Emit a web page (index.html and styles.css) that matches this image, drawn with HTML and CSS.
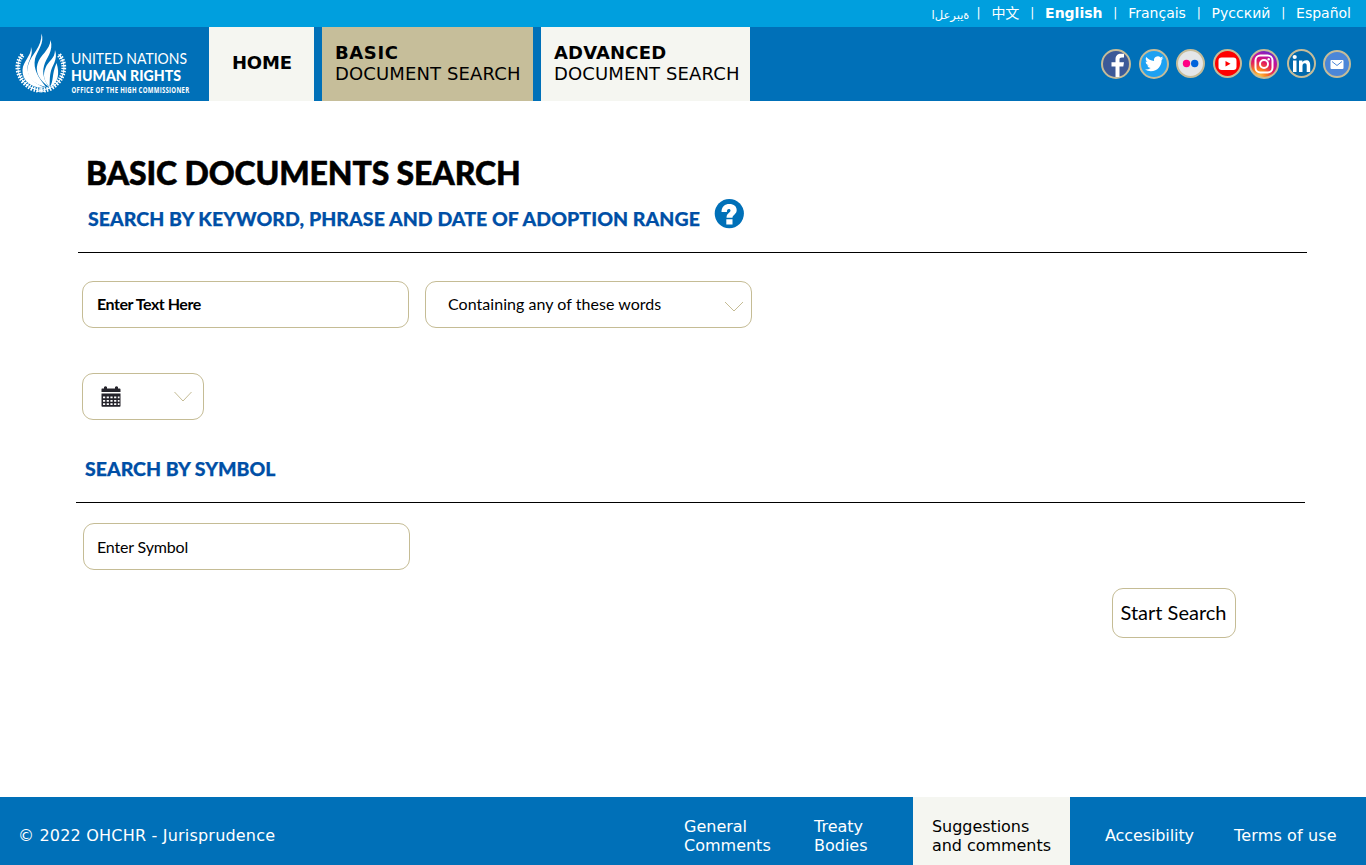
FILE: index.html
```html
<!DOCTYPE html>
<html lang="en">
<head>
<meta charset="utf-8">
<title>OHCHR - Jurisprudence</title>
<link rel="stylesheet" href="styles.css">
</head>
<body>
<div class="page">
  <div class="languages">
    <span class="lang lang-ar">ةيبرعل&zwnj;ا</span><span class="bar bar-first">|</span>
    <span class="lang lang-zh">中文</span><span class="bar">|</span>
    <span class="lang lang-en">English</span><span class="bar">|</span>
    <span class="lang lang-fr">Français</span><span class="bar">|</span>
    <span class="lang lang-ru">Русский</span><span class="bar">|</span>
    <span class="lang lang-es">Español</span>
  </div>
  <header class="header">
    <svg class="logo" viewBox="0 0 209 74" width="209" height="74">
      <g fill="#fff">
        <path d="M41.500 6.500C45 16 37 24 35 32C33 42 38 50 46 60C32 57 25 48 28.500 37C31 28 42 20 41.500 6.500Z"/>
        <path d="M50.500 13C54 24 46 31 44 39C42 46 44 53 49 60C39 53 35 45 37.500 37C40 28 50 23 50.500 13Z"/>
        <path d="M55 23C58.500 33 51.500 39 50.500 46C49.500 51 50 54 49.500 60C44 54 42.500 48 45.500 41C48 34 55 32 55 23Z"/>
        <path d="M56.500 36C60 47 58 56 50 60C54 53 51.500 48 56.500 36Z"/>
        <path d="M31 20C34 28 27.500 34 27.500 41C27.500 49 34 57 45 60.500C31 62 22 53 22.500 43C23 34 31.500 29 31 20Z"/>
      </g>
      <g fill="none" stroke="#fff">
        <path d="M23 27C14 37 17 54 32 61Q38 63 46 65M58.500 27C68 37 65 54 50 61Q43 63 36 65" stroke-width="1"/>
        <path d="M22.500 28C14 37 17 54 33 62Q37 63 41 63" stroke-width="4.800" stroke-dasharray="1.500 1.300"/>
        <path d="M59 28C67.500 37 65 54 49 62Q45 63 41 63" stroke-width="4.800" stroke-dasharray="1.500 1.300"/>
      </g>
      <text class="logo-light" x="71" y="37.300" textLength="116" lengthAdjust="spacingAndGlyphs">UNITED NATIONS</text>
      <text class="logo-bold" x="71" y="53.800" textLength="110" lengthAdjust="spacingAndGlyphs">HUMAN RIGHTS</text>
      <text class="logo-small" transform="translate(71.500 66.200) scale(.75 1)">OFFICE OF THE HIGH COMMISSIONER</text>
    </svg>
    <nav class="tabs">
      <a class="tab tab-home"><b>HOME</b></a>
      <a class="tab tab-basic"><b>BASIC</b><span>DOCUMENT SEARCH</span></a>
      <a class="tab tab-advanced"><b>ADVANCED</b><span>DOCUMENT SEARCH</span></a>
    </nav>
    <div class="social">
      <svg width="266" height="32" viewBox="1100 48 266 32">
        <defs>
          <radialGradient id="insta" cx=".28" cy="1" r="1.05">
            <stop offset="0" stop-color="#ffdc5a"/><stop offset=".3" stop-color="#fa7e1e"/>
            <stop offset=".58" stop-color="#e01563"/><stop offset=".8" stop-color="#b515a8"/><stop offset="1" stop-color="#5b30d0"/>
          </radialGradient>
        </defs>
        <g stroke="#c5bc99" stroke-width="2">
          <circle cx="1116" cy="64" r="14" fill="#3b5998"/>
          <circle cx="1154" cy="64" r="14" fill="#1da1f2"/>
          <circle cx="1190.500" cy="63.500" r="13.500" fill="#e4e6e8"/>
          <circle cx="1227.500" cy="63.500" r="13.500" fill="#f00"/>
          <circle cx="1264" cy="64" r="14" fill="url(#insta)"/>
          <circle cx="1301.500" cy="63.500" r="13.500" fill="#0069ac"/>
          <circle cx="1337" cy="64" r="13" fill="#4b86d8"/>
        </g>
        <path fill="#fff" d="M1115.500 77V66.500h-4v-4.300h4v-2.700c0-4 2.300-5.700 5.500-5.700h3v3.600h-2c-2 0-2.500.9-2.500 2.300v2.500h4.500l-.7 4.300h-3.800V77z"/>
        <path fill="#fff" transform="translate(1145 54.500) scale(.77)" d="M23.950 4.570a10 10 0 01-2.820.77 4.960 4.960 0 002.160-2.720c-.95.550-2 .950-3.120 1.180a4.920 4.920 0 00-8.380 4.480C7.690 8.090 4.070 6.130 1.640 3.160a4.820 4.820 0 00-.67 2.470c0 1.710.87 3.210 2.190 4.100a4.900 4.900 0 01-2.230-.61v.06a4.920 4.920 0 003.950 4.820 5 5 0 01-2.210.09 4.940 4.940 0 004.600 3.420A9.870 9.870 0 010 19.540a14 14 0 007.550 2.210c9.050 0 14-7.500 14-13.980 0-.21 0-.42-.02-.63a9.940 9.940 0 002.460-2.550z"/>
        <circle cx="1186.500" cy="63.500" r="3.700" fill="#ff0084"/><circle cx="1194.700" cy="63.500" r="3.700" fill="#0063dc"/>
        <rect x="1218.500" y="57.500" width="18" height="12.500" rx="3.200" fill="#fff"/><path d="M1225.500 61v5.600l5-2.800z" fill="#f00"/>
        <g fill="none" stroke="#fff" stroke-width="2"><rect x="1255.500" y="55.500" width="17" height="17" rx="4.800"/><circle cx="1264" cy="64" r="4"/></g><circle cx="1268.700" cy="59.300" r="1.200" fill="#fff"/>
        <path fill="#fff" d="M1293 60.500h3.500V72H1293zM1299 60.500h3.400v1.700c.7-1.200 2-2 3.700-2 3.200 0 4.100 2 4.100 5.200V72h-3.500v-5.900c0-1.700-.3-2.900-1.900-2.900s-2.300 1.100-2.300 2.900V72h-3.500z"/><circle cx="1294.700" cy="57" r="2.100" fill="#fff"/>
        <rect x="1330.500" y="60" width="13" height="9" rx="1" fill="#fff"/><path d="M1332 61.500l5 4 5-4" fill="none" stroke="#4b86d8"/>
      </svg>
    </div>
  </header>
  <main class="main">
    <h1 class="title">BASIC DOCUMENTS SEARCH</h1>
    <div class="section-head">
      <h2 class="subtitle subtitle-keyword">SEARCH BY KEYWORD, PHRASE AND DATE OF ADOPTION RANGE</h2>
      <svg class="help" width="30" height="30" viewBox="0 0 30 30"><circle cx="15.300" cy="14.600" r="14.600" fill="#0070b8"/><path fill="#fff" d="M7.500 13C7.500 7.500 11 5 15.300 5c4.700 0 7.400 2.400 7.400 6.200 0 4-4.200 4.600-4.200 7.500h-6c0-4.700 4-4.700 4-7.100 0-1.100-.6-1.700-1.600-1.700-1.400 0-2 1-2 3.100zM12.300 20.200h6.200v5.200h-6.200z"/></svg>
    </div>
    <hr class="rule">
    <div class="row">
      <div class="field field-text"><span class="enter-text">Enter Text Here</span></div>
      <div class="field field-select"><span class="containing">Containing any of these words</span><svg class="chevron" width="20" height="12" viewBox="0 0 20 12"><path d="M1 1l9 9 9-9"/></svg></div>
    </div>
    <div class="field field-date">
      <svg width="20" height="21" viewBox="0 0 20 21"><path fill="#24232b" d="M1 2.500h2V1q1.500-1.500 3 0v1.500h8V1q1.500-1.500 3 0v1.500h1.500q1 0 1 1V6H.5V3.500q0-1 .5-1zM.5 7.500h19V20q0 .7-.7.700H1.200q-.7 0-.7-.7z"/><path stroke="#fff" stroke-width="1.800" stroke-dasharray="2.200 1.500" d="M2 11.300h16.500M2 14.800h16.500M2 18.200h16.500"/></svg>
      <svg class="chevron" width="20" height="12" viewBox="0 0 20 12"><path d="M1.500 1l8.500 9 8.500-9"/></svg>
    </div>
    <h2 class="subtitle subtitle-symbol">SEARCH BY SYMBOL</h2>
    <hr class="rule rule-symbol">
    <div class="field field-symbol"><span class="enter-symbol">Enter Symbol</span></div>
    <button class="start"><span>Start Search</span></button>
  </main>
  <footer class="footer">
    <span class="copyright">© 2022 OHCHR - Jurisprudence</span>
    <nav class="links">
      <a class="link link-general">General<br>Comments</a>
      <a class="link link-treaty">Treaty<br>Bodies</a>
      <a class="link link-suggest">Suggestions<br>and comments</a>
      <a class="link link-access">Accesibility</a>
      <a class="link link-terms">Terms of use</a>
    </nav>
  </footer>
</div>
</body>
</html>
```
FILE: styles.css
```css
* { box-sizing: border-box; }
body { margin: 0; background: #fff; color: #000; font-family: "DejaVu Sans", sans-serif; }
.page { height: 865px; display: flex; flex-direction: column; }

.languages { height: 27px; background: #009fde; color: #fff; display: flex; align-items: center; justify-content: flex-end; padding: 0 15px 2px 0; font-size: 14px; line-height: 24px; }
.lang { white-space: nowrap; }
.lang-ar { font-size: 11.500px; padding-top: 5px; }
.lang-zh { font-family: "Noto Sans CJK SC", sans-serif; font-size: 14px; padding-bottom: 2px; }
.lang-en { font-weight: bold; }
.bar { width: 25.700px; font-size: 12px; text-align: center; }
.bar-first { width: 22px; text-align: left; padding-left: 7px; }

.header { height: 74px; background: #0070b8; display: flex; }
.logo { flex: none; fill: #fff; }
.logo-light { font: 400 15.500px Lato, sans-serif; }
.logo-bold { font: 900 15px Lato, sans-serif; }
.logo-small { font: 700 8px "Open Sans", sans-serif; letter-spacing: .38px; }
.tabs { display: flex; gap: 8px; }
.tab { background: #f5f6f1; display: flex; flex-direction: column; justify-content: center; font-size: 18px; line-height: 21px; white-space: nowrap; padding: 0 0 3px; }
.tab span { letter-spacing: .13px; }
.tab-home { width: 105px; padding-left: 23px; letter-spacing: -.2px; }
.tab-basic { width: 211px; padding-left: 13px; background: #c6be9a; }
.tab-basic b { letter-spacing: .6px; }
.tab-advanced { width: 209px; padding-left: 13px; }
.tab-advanced b { letter-spacing: .15px; }
.social { margin-left: auto; padding-top: 21px; }

.main { flex: 1; padding: 53px 59px 0 78px; font-family: Lato, sans-serif; }
.title { margin: 0; padding-left: 8px; font-size: 32px; line-height: 38px; font-weight: 900; letter-spacing: -.13px; -webkit-text-stroke: .5px #000; white-space: nowrap; }
.section-head { display: flex; align-items: flex-start; gap: 14px; padding: 6px 0 0 10px; }
.subtitle { margin: 0; color: #004fa6; font-size: 19.500px; line-height: 24px; font-weight: 900; -webkit-text-stroke: .25px #004fa6; white-space: nowrap; }
.subtitle-keyword { margin-top: 9px; width: 612px; letter-spacing: .06px; }
.help { margin-top: 1px; }
.rule { margin: 21px 0 0; border: 0; height: 1px; background: #000; }
.row { display: flex; gap: 16px; padding: 28px 0 0 4px; }
.field { height: 47px; border: 1px solid #c5bc95; border-radius: 11px; display: flex; align-items: center; font-size: 16px; white-space: nowrap; }
.field-text { width: 327px; padding: 0 0 2px 14px; font-weight: 700; letter-spacing: -.45px; }
.field-select { width: 327px; padding: 0 7px 2px 22px; justify-content: space-between; letter-spacing: .04px; }
.chevron { flex: none; fill: none; stroke: #c5bc95; stroke-width: 1; }
.field-select .chevron { margin-top: 6px; }
.field-date { width: 122px; margin: 45px 0 0 4px; padding: 0 10px 0 18px; justify-content: space-between; }
.field-date .chevron { margin-top: 1px; }
.subtitle-symbol { margin: 37px 0 0 7px; }
.rule-symbol { margin: 21px 2px 0 -2px; }
.field-symbol { width: 327px; margin: 20px 0 0 5px; padding-left: 13px; letter-spacing: -.17px; }
.start { display: flex; align-items: center; justify-content: center; width: 124px; height: 50px; margin: 18px 0 0 1034px; padding: 0 1px 2px 0; border: 1px solid #c5bc95; border-radius: 11px; background: #fff; color: #000; font: 20px Lato, sans-serif; white-space: nowrap; }

.footer { height: 68px; background: #0070b8; color: #fff; display: flex; justify-content: space-between; font-size: 16px; line-height: 19px; white-space: nowrap; }
.copyright { padding: 29px 0 0 18px; letter-spacing: .2px; }
.links { display: flex; }
.link { padding-top: 20px; }
.link-general { width: 130px; }
.link-treaty { width: 99px; }
.link-suggest { width: 157px; padding-left: 19px; background: #f5f6f1; color: #000; letter-spacing: -.05px; }
.link-access { width: 164px; padding: 29px 0 0 35px; letter-spacing: -.1px; }
.link-terms { width: 132px; padding-top: 29px; letter-spacing: .15px; }
```
